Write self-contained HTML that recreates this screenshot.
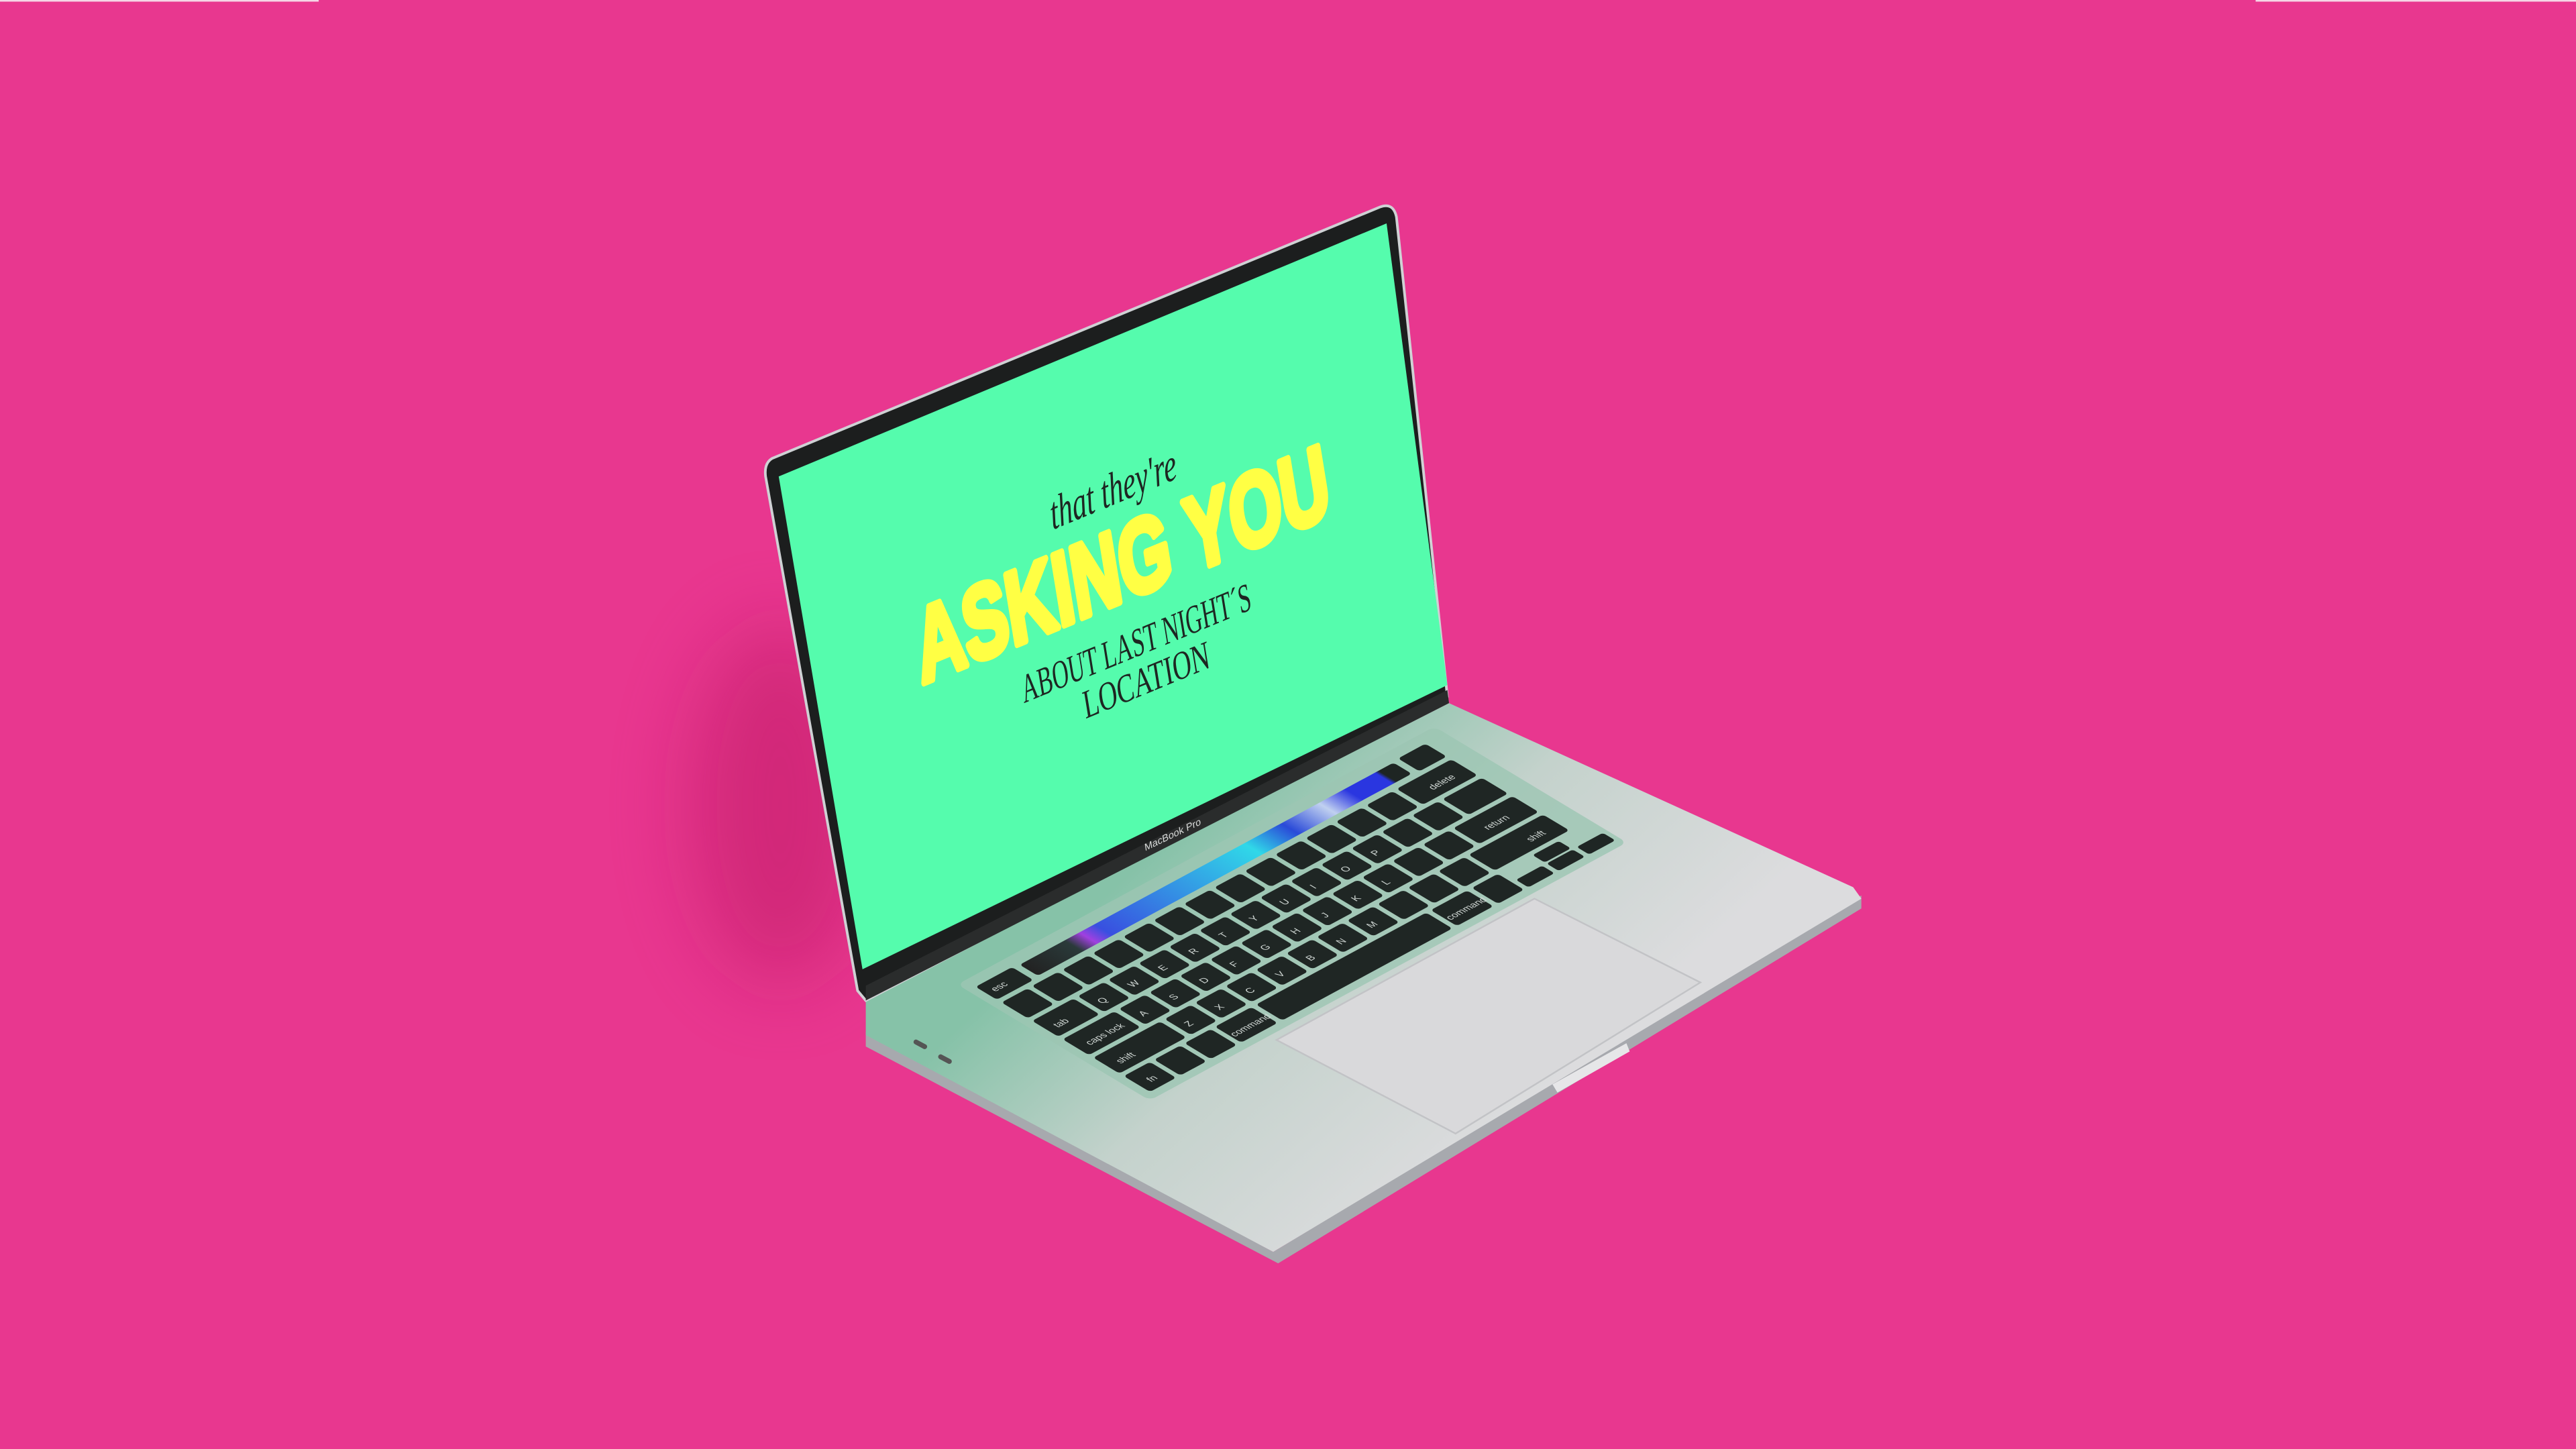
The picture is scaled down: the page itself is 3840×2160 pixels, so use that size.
<!DOCTYPE html>
<html><head><meta charset="utf-8"><style>
html,body{margin:0;padding:0;background:#E8378F;overflow:hidden}
svg{display:block}
</style></head><body>
<svg width="3840" height="2160" viewBox="0 0 1568 882" xmlns="http://www.w3.org/2000/svg">
<defs>
<filter id="bl" x="-50%" y="-50%" width="200%" height="200%"><feGaussianBlur stdDeviation="24"/></filter>
<linearGradient id="deck" gradientUnits="userSpaceOnUse" x1="700" y1="520" x2="880" y2="720">
<stop offset="0" stop-color="#86c2a8"/><stop offset="0.45" stop-color="#c4d2cc"/><stop offset="1" stop-color="#dcdcde"/></linearGradient>
<linearGradient id="tb" x1="0" y1="0" x2="1" y2="0">
<stop offset="0" stop-color="#222"/><stop offset="0.12" stop-color="#2a3a3a"/><stop offset="0.16" stop-color="#a040e0"/><stop offset="0.2" stop-color="#3850e0"/><stop offset="0.6" stop-color="#30d8e8"/><stop offset="0.7" stop-color="#2a4ad8"/><stop offset="0.8" stop-color="#c0d0f0"/><stop offset="0.87" stop-color="#2a36e0"/><stop offset="0.95" stop-color="#2a36e0"/><stop offset="0.96" stop-color="#1e2523"/></linearGradient>
</defs>
<rect width="1568" height="882" fill="#E8378F"/>
<rect x="0" y="0" width="194" height="1" fill="#f6d6e6"/>
<rect x="1373" y="0" width="195" height="1" fill="#f6d6e6"/>
<!-- shadow -->
<ellipse cx="475" cy="490" rx="55" ry="110" fill="#b8145f" opacity="0.45" filter="url(#bl)"/>
<!-- base edge -->
<polygon points="527,628 775,762 1133,545 1133,553 778,769 527,637" fill="#a7a9ae"/>
<!-- deck -->
<polygon points="527,608 882,428 1128,540 1133,547 775,762 527,630" fill="url(#deck)"/>
<!-- ports -->
<rect x="556" y="634" width="9" height="3" rx="1.5" fill="#555" transform="rotate(28 560 635)"/>
<rect x="571" y="643" width="9" height="3" rx="1.5" fill="#555" transform="rotate(28 575 644)"/>
<!-- trackpad -->
<polygon points="777,633 934,547 1035,598 886,690" fill="#d9d9db" stroke="#c2c3c6" stroke-width="1"/>
<polygon points="945,660 990,635 992,640 948,665" fill="#e6e6e8"/>
<!-- keyboard -->
<g transform="matrix(18.5,-10,18.6,11.2,591,599)">
<rect x="-0.25" y="-0.2" width="15.7" height="6.3" rx="0.2" fill="#9cc6b3" opacity="0.8"/>
<g fill="#1f2624">
<rect x="0" y="0.15" width="1.2" height="0.7" rx="0.1"/>
<rect x="1.4" y="0.2" width="12.3" height="0.6" rx="0.1" fill="url(#tb)"/>
<rect x="13.9" y="0.15" width="0.9" height="0.7" rx="0.1"/>
<rect x="0" y="1" width=".86" height=".86" rx=".1"/><rect x="1" y="1" width=".86" height=".86" rx=".1"/><rect x="2" y="1" width=".86" height=".86" rx=".1"/><rect x="3" y="1" width=".86" height=".86" rx=".1"/><rect x="4" y="1" width=".86" height=".86" rx=".1"/><rect x="5" y="1" width=".86" height=".86" rx=".1"/><rect x="6" y="1" width=".86" height=".86" rx=".1"/><rect x="7" y="1" width=".86" height=".86" rx=".1"/><rect x="8" y="1" width=".86" height=".86" rx=".1"/><rect x="9" y="1" width=".86" height=".86" rx=".1"/><rect x="10" y="1" width=".86" height=".86" rx=".1"/><rect x="11" y="1" width=".86" height=".86" rx=".1"/><rect x="12" y="1" width=".86" height=".86" rx=".1"/><rect x="13" y="1" width="1.8" height=".86" rx=".1"/>
<rect x="0" y="2" width="1.36" height=".86" rx=".1"/><rect x="1.5" y="2" width=".86" height=".86" rx=".1"/><rect x="2.5" y="2" width=".86" height=".86" rx=".1"/><rect x="3.5" y="2" width=".86" height=".86" rx=".1"/><rect x="4.5" y="2" width=".86" height=".86" rx=".1"/><rect x="5.5" y="2" width=".86" height=".86" rx=".1"/><rect x="6.5" y="2" width=".86" height=".86" rx=".1"/><rect x="7.5" y="2" width=".86" height=".86" rx=".1"/><rect x="8.5" y="2" width=".86" height=".86" rx=".1"/><rect x="9.5" y="2" width=".86" height=".86" rx=".1"/><rect x="10.5" y="2" width=".86" height=".86" rx=".1"/><rect x="11.5" y="2" width=".86" height=".86" rx=".1"/><rect x="12.5" y="2" width=".86" height=".86" rx=".1"/><rect x="13.5" y="2" width="1.3" height=".86" rx=".1"/>
<rect x="0" y="3" width="1.7" height=".86" rx=".1"/><rect x="1.85" y="3" width=".86" height=".86" rx=".1"/><rect x="2.85" y="3" width=".86" height=".86" rx=".1"/><rect x="3.85" y="3" width=".86" height=".86" rx=".1"/><rect x="4.85" y="3" width=".86" height=".86" rx=".1"/><rect x="5.85" y="3" width=".86" height=".86" rx=".1"/><rect x="6.85" y="3" width=".86" height=".86" rx=".1"/><rect x="7.85" y="3" width=".86" height=".86" rx=".1"/><rect x="8.85" y="3" width=".86" height=".86" rx=".1"/><rect x="9.85" y="3" width=".86" height=".86" rx=".1"/><rect x="10.85" y="3" width=".86" height=".86" rx=".1"/><rect x="11.85" y="3" width=".86" height=".86" rx=".1"/><rect x="12.85" y="3" width="1.95" height=".86" rx=".1"/>
<rect x="0" y="4" width="2.2" height=".86" rx=".1"/><rect x="2.35" y="4" width=".86" height=".86" rx=".1"/><rect x="3.35" y="4" width=".86" height=".86" rx=".1"/><rect x="4.35" y="4" width=".86" height=".86" rx=".1"/><rect x="5.35" y="4" width=".86" height=".86" rx=".1"/><rect x="6.35" y="4" width=".86" height=".86" rx=".1"/><rect x="7.35" y="4" width=".86" height=".86" rx=".1"/><rect x="8.35" y="4" width=".86" height=".86" rx=".1"/><rect x="9.35" y="4" width=".86" height=".86" rx=".1"/><rect x="10.35" y="4" width=".86" height=".86" rx=".1"/><rect x="11.35" y="4" width=".86" height=".86" rx=".1"/><rect x="12.35" y="4" width="2.45" height=".86" rx=".1"/>
<rect x="0" y="5" width=".86" height=".86" rx=".1"/><rect x="1" y="5" width=".86" height=".86" rx=".1"/><rect x="2" y="5" width=".86" height=".86" rx=".1"/><rect x="3" y="5" width="1.2" height=".86" rx=".1"/><rect x="4.35" y="5" width="5.6" height=".86" rx=".1"/><rect x="10.1" y="5" width="1.2" height=".86" rx=".1"/><rect x="11.45" y="5" width=".86" height=".86" rx=".1"/><rect x="12.45" y="5.45" width=".86" height=".41" rx=".08"/><rect x="13.45" y="5" width=".86" height=".4" rx=".08"/><rect x="13.45" y="5.46" width=".86" height=".4" rx=".08"/><rect x="14.45" y="5.45" width=".86" height=".41" rx=".08"/>
</g>
<g fill="#cfd6d3" font-family="Liberation Sans, sans-serif" font-size="0.28">
<text x="0.2" y="0.6">esc</text><text x="0.25" y="2.6">tab</text><text x="0.3" y="3.6">caps lock</text><text x="0.3" y="4.6">shift</text><text x="0.3" y="5.6">fn</text>
<text x="13.6" y="1.6">delete</text><text x="13.4" y="3.6">return</text><text x="13.8" y="4.6">shift</text>
<text x="1.7" y="2.6">Q</text><text x="2.7" y="2.6">W</text><text x="3.7" y="2.6">E</text><text x="4.7" y="2.6">R</text><text x="5.7" y="2.6">T</text><text x="6.7" y="2.6">Y</text><text x="7.7" y="2.6">U</text><text x="8.7" y="2.6">I</text><text x="9.7" y="2.6">O</text><text x="10.7" y="2.6">P</text>
<text x="2.05" y="3.6">A</text><text x="3.05" y="3.6">S</text><text x="4.05" y="3.6">D</text><text x="5.05" y="3.6">F</text><text x="6.05" y="3.6">G</text><text x="7.05" y="3.6">H</text><text x="8.05" y="3.6">J</text><text x="9.05" y="3.6">K</text><text x="10.05" y="3.6">L</text>
<text x="2.55" y="4.6">Z</text><text x="3.55" y="4.6">X</text><text x="4.55" y="4.6">C</text><text x="5.55" y="4.6">V</text><text x="6.55" y="4.6">B</text><text x="7.55" y="4.6">N</text><text x="8.55" y="4.6">M</text>
<text x="3.05" y="5.6">command</text><text x="10.15" y="5.6">command</text>
</g>
</g>
<!-- lid -->
<path d="M470,279 L840,126 Q848,123 850,132 L881,424 L527,609 L522,603 L466,290 Q465,282 470,279 Z" fill="#1c1e1e" stroke="#cfd1d4" stroke-width="1.6"/>
<polygon points="474,290 844,136 881,417 525,590" fill="#55FCAD"/>
<polygon points="527,600 881,420 882,428 527,609" fill="#2a2c2c"/>
<text x="0" y="0" font-family="Liberation Sans, sans-serif" font-size="6" fill="#d8dad9" transform="matrix(0.95,-0.45,0.15,0.99,697,518)">MacBook Pro</text>
<!-- screen content -->
<g transform="matrix(0.2319,-0.0956,0.049,0.3,475,290)">
<text x="813" y="315" text-anchor="middle" font-family="Liberation Serif, serif" font-style="italic" font-size="92" fill="#1e2622" textLength="330" lengthAdjust="spacingAndGlyphs">that they're</text>
<text x="805" y="505" text-anchor="middle" font-family="Liberation Sans, sans-serif" font-weight="bold" font-size="205" fill="#FFFF44" stroke="#FFFF44" stroke-width="14" stroke-linejoin="round" textLength="1080" lengthAdjust="spacingAndGlyphs">ASKING YOU</text>
<text x="808" y="622" text-anchor="middle" font-family="Liberation Serif, serif" font-size="80" fill="#1e2622" textLength="600" lengthAdjust="spacingAndGlyphs">ABOUT LAST NIGHT´S</text>
<text x="818" y="700" text-anchor="middle" font-family="Liberation Serif, serif" font-size="80" fill="#1e2622" textLength="330" lengthAdjust="spacingAndGlyphs">LOCATION</text>
</g>
</svg>
</body></html>
